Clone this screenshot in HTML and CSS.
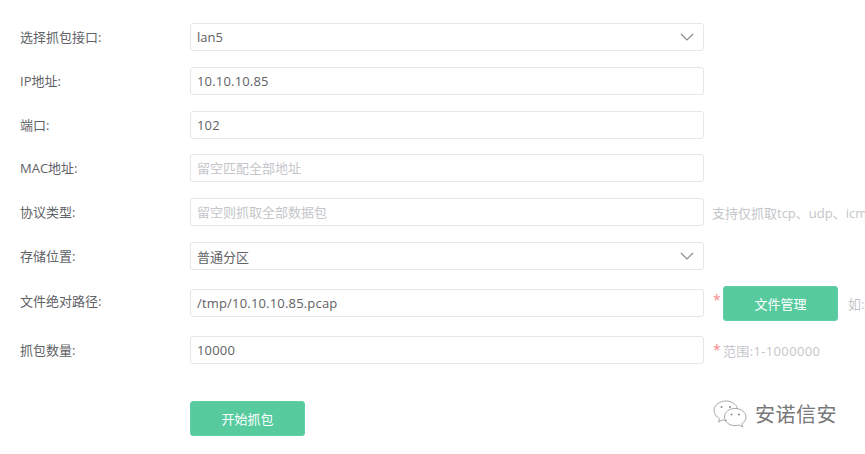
FILE: index.html
```html
<!DOCTYPE html>
<html lang="zh-CN">
<head>
<meta charset="utf-8">
<title>抓包</title>
<link rel="stylesheet" href="styles.css">
</head>
<body>
<form class="form">
  <div class="row">
    <label class="label">选择抓包接口:</label>
    <div class="field select"><span>lan5</span>
      <svg class="chev" width="14" height="8" viewBox="0 0 14 8"><path d="M1 1l6 6 6-6" fill="none" stroke="#8a8a8a" stroke-width="1.2"/></svg>
    </div>
  </div>
  <div class="row">
    <label class="label">IP地址:</label>
    <input class="field value" value="10.10.10.85">
  </div>
  <div class="row row-tight">
    <label class="label">端口:</label>
    <input class="field value" value="102">
  </div>
  <div class="row">
    <label class="label">MAC地址:</label>
    <input class="field" placeholder="留空匹配全部地址">
  </div>
  <div class="row">
    <label class="label">协议类型:</label>
    <input class="field" placeholder="留空则抓取全部数据包">
    <span class="hint hint-first">支持仅抓取tcp、udp、icmp协议</span>
  </div>
  <div class="row">
    <label class="label">存储位置:</label>
    <div class="field select"><span>普通分区</span>
      <svg class="chev" width="14" height="8" viewBox="0 0 14 8"><path d="M1 1l6 6 6-6" fill="none" stroke="#8a8a8a" stroke-width="1.2"/></svg>
    </div>
  </div>
  <div class="row row-file">
    <label class="label label-up">文件绝对路径:</label>
    <input class="field value" value="/tmp/10.10.10.85.pcap">
    <span class="star">*</span>
    <button type="button" class="btn btn-file">文件管理</button>
    <span class="hint hint-example">如:/tmp/test.pcap</span>
  </div>
  <div class="row row-count">
    <label class="label">抓包数量:</label>
    <input class="field value" value="10000">
    <span class="star">*</span>
    <span class="hint hint-range">范围:1-1000000</span>
  </div>
  <div class="actions">
    <button type="button" class="btn btn-start">开始抓包</button>
  </div>
</form>
<div class="mark">
  <svg class="mark-icon" width="34" height="30" viewBox="0 0 34 30" fill="none" stroke="#a8a8a8" stroke-width="1">
    <path d="M14 20.5c-1.6 0-3-.2-4.3-.7L5.500 22l1-3.300C3.200 16.700 1 13.700 1 10.300 1 5.100 6.800 1 13 1c5.600 0 10.600 3.300 11.600 8"/>
    <path d="M22 8.500c6 0 11 3.800 11 8.500 0 2.800-1.700 5.200-4.200 6.800l1 3.200-3.700-2c-1.300.4-2.700.6-4.100.6-6 0-10.500-3.800-10.500-8.600S16 8.500 22 8.500z"/>
    <circle cx="8.500" cy="7" r="1" fill="#8a8a8a" stroke="none"/>
    <circle cx="17" cy="7" r="1" fill="#8a8a8a" stroke="none"/>
    <circle cx="18.500" cy="14.500" r="1" fill="#8a8a8a" stroke="none"/>
    <circle cx="26" cy="14.500" r="1" fill="#8a8a8a" stroke="none"/>
  </svg>
  <span class="mark-text">安诺信安</span>
</div>
</body>
</html>
```
FILE: styles.css
```css
html, body {
  margin: 0;
  padding: 0;
  width: 865px;
  height: 454px;
  overflow: hidden;
  background: #fff;
}
body {
  position: relative;
  font-family: "Open Sans", "Noto Sans CJK SC", sans-serif;
  font-size: 13px;
  color: #606266;
}
.form {
  padding: 23px 0 0 20px;
  width: 1100px;
}
.row {
  display: flex;
  align-items: center;
  height: 28px;
  margin-bottom: 16px;
  white-space: nowrap;
}
.row-tight {
  margin-bottom: 15px;
}
.row-file {
  margin-top: 19px;
  margin-bottom: 19px;
}
.row-count {
  margin-bottom: 0;
}
.label {
  width: 170px;
  flex: none;
  font-size: 13px;
  color: #5f6266;
  line-height: 28px;
}
.label-up {
  position: relative;
  top: -2px;
}
.field {
  box-sizing: border-box;
  flex: none;
  width: 514px;
  height: 28px;
  margin: 0;
  padding: 0 6px;
  border: 1px solid #e4e6e8;
  border-radius: 3px;
  background: #fff;
  font: inherit;
  font-size: 13px;
  color: #606266;
  outline: none;
}
.value {
  letter-spacing: 0.180px;
}
.field::placeholder {
  color: #c4c6ca;
  opacity: 1;
}
.select {
  display: flex;
  align-items: center;
  justify-content: space-between;
  padding-right: 9px;
}
.chev {
  flex: none;
}
.hint {
  font-size: 13px;
  color: #c4c6ca;
}
.hint-first {
  margin-left: 8px;
}
.hint-example {
  margin-left: 10px;
}
.hint-range {
  letter-spacing: 0.350px;
}
.star {
  width: 5px;
  margin: 0 5px 0 9px;
  align-self: flex-start;
  color: #f78a8a;
  font-size: 14px;
  line-height: 22px;
}
.row-count .star {
  padding-top: 3px;
}
.btn {
  box-sizing: border-box;
  width: 115px;
  height: 35px;
  border: 1px solid #62d0a6;
  border-radius: 3px;
  background: #57cb9e;
  color: #fff;
  font: inherit;
  font-size: 13px;
  padding: 0;
}
.btn-file {
  flex: none;
}
.actions {
  margin: 37px 0 0 170px;
}
.mark {
  position: absolute;
  left: 713px;
  top: 400px;
  display: flex;
  align-items: center;
  gap: 8px;
}
.mark-text {
  font-size: 20px;
  letter-spacing: 0.500px;
  color: #777;
  line-height: 30px;
}
```
